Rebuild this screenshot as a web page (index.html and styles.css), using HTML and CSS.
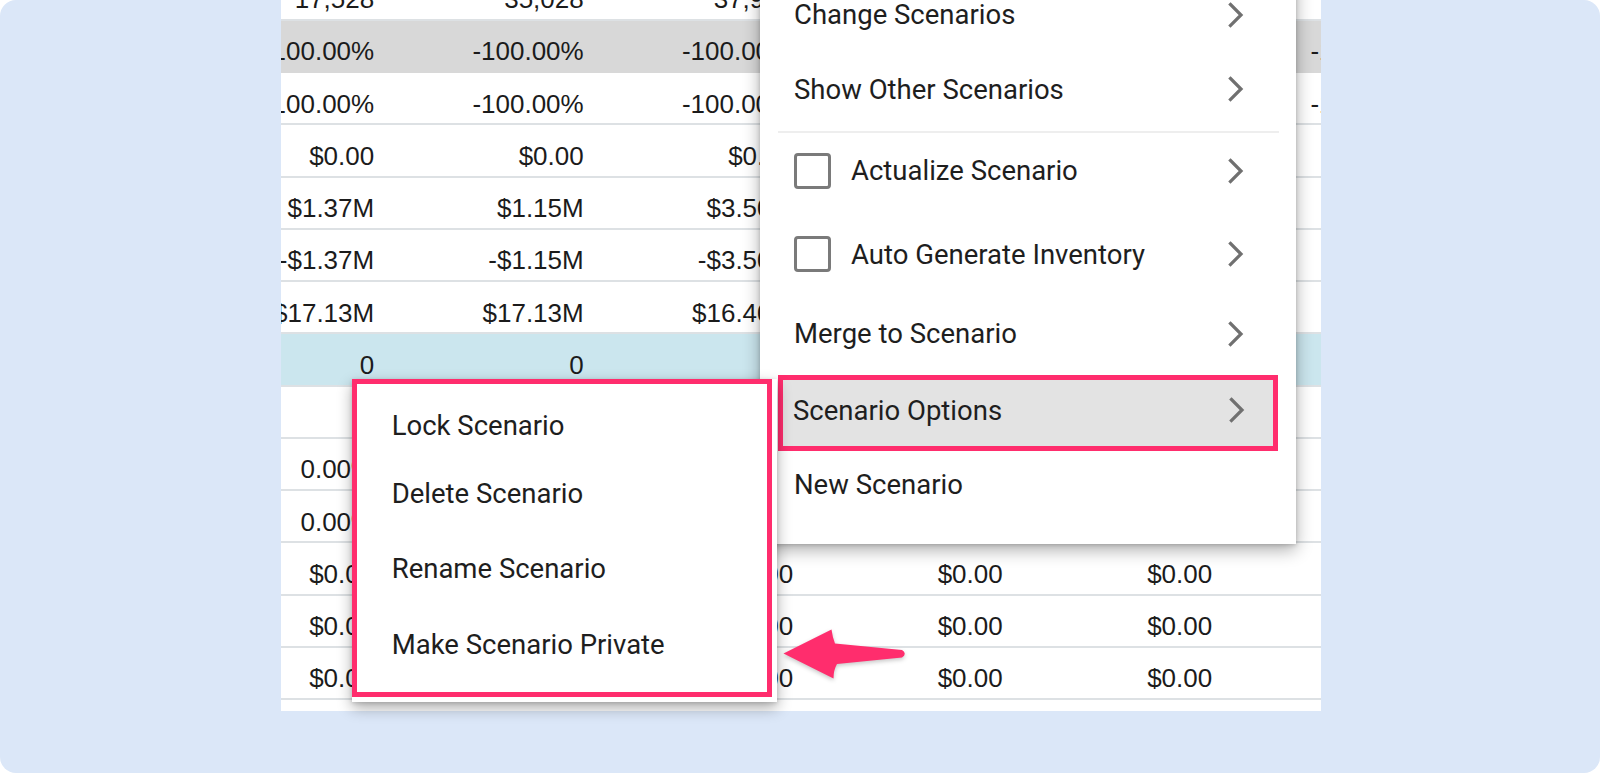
FILE: index.html
```html
<!DOCTYPE html>
<html>
<head>
<meta charset="utf-8">
<link rel="stylesheet" href="styles.css">
</head>
<body>
<div class="card">
  <div class="sheet">
    <div class="rows">
      <div class="row"><div class="cell">17,528</div><div class="cell">35,028</div><div class="cell">37,928</div><div class="cell">41,310</div><div class="cell">44,012</div><div class="cell">46,250</div></div>
      <div class="row row-gray"><div class="cell">-100.00%</div><div class="cell">-100.00%</div><div class="cell">-100.00%</div><div class="cell">-100.00%</div><div class="cell">-100.00%</div><div class="cell">-100.00%</div></div>
      <div class="row"><div class="cell">-100.00%</div><div class="cell">-100.00%</div><div class="cell">-100.00%</div><div class="cell">-100.00%</div><div class="cell">-100.00%</div><div class="cell">-100.00%</div></div>
      <div class="row"><div class="cell">$0.00</div><div class="cell">$0.00</div><div class="cell">$0.00</div><div class="cell">$0.00</div><div class="cell">$0.00</div><div class="cell">$0.00</div></div>
      <div class="row"><div class="cell">$1.37M</div><div class="cell">$1.15M</div><div class="cell">$3.50M</div><div class="cell">$2.10M</div><div class="cell">$1.84M</div><div class="cell">$2.63M</div></div>
      <div class="row"><div class="cell">-$1.37M</div><div class="cell">-$1.15M</div><div class="cell">-$3.50M</div><div class="cell">-$2.10M</div><div class="cell">-$1.84M</div><div class="cell">-$2.63M</div></div>
      <div class="row"><div class="cell">$17.13M</div><div class="cell">$17.13M</div><div class="cell">$16.40M</div><div class="cell">$15.92M</div><div class="cell">$14.08M</div><div class="cell">$3.45M</div></div>
      <div class="row row-blue"><div class="cell">0</div><div class="cell">0</div><div class="cell">0</div><div class="cell">0</div><div class="cell">0</div><div class="cell">0</div></div>
      <div class="row"><div class="cell"></div><div class="cell"></div><div class="cell"></div><div class="cell"></div><div class="cell"></div><div class="cell"></div></div>
      <div class="row"><div class="cell">0.00%</div><div class="cell">0.00%</div><div class="cell">0.00%</div><div class="cell">0.00%</div><div class="cell">0.00%</div><div class="cell">0.00%</div></div>
      <div class="row"><div class="cell">0.00%</div><div class="cell">0.00%</div><div class="cell">0.00%</div><div class="cell">0.00%</div><div class="cell">0.00%</div><div class="cell">0.00%</div></div>
      <div class="row"><div class="cell">$0.00</div><div class="cell">$0.00</div><div class="cell">$0.00</div><div class="cell">$0.00</div><div class="cell">$0.00</div><div class="cell">$0.00</div></div>
      <div class="row"><div class="cell">$0.00</div><div class="cell">$0.00</div><div class="cell">$0.00</div><div class="cell">$0.00</div><div class="cell">$0.00</div><div class="cell">$0.00</div></div>
      <div class="row"><div class="cell">$0.00</div><div class="cell">$0.00</div><div class="cell">$0.00</div><div class="cell">$0.00</div><div class="cell">$0.00</div><div class="cell">$0.00</div></div>
      <div class="row"><div class="cell"></div><div class="cell"></div><div class="cell"></div><div class="cell"></div><div class="cell"></div><div class="cell"></div></div>
    </div>
  </div>

  <div class="menu">
    <div class="mi mi-change"><span class="label">Change Scenarios</span><svg class="chev" viewBox="0 0 16 26"><polyline points="2.5,2.5 13,13 2.5,23.5"/></svg></div>
    <div class="mi mi-show"><span class="label">Show Other Scenarios</span><svg class="chev" viewBox="0 0 16 26"><polyline points="2.5,2.5 13,13 2.5,23.5"/></svg></div>
    <div class="divider"></div>
    <div class="mi mi-actualize"><span class="box"></span><span class="label">Actualize Scenario</span><svg class="chev" viewBox="0 0 16 26"><polyline points="2.5,2.5 13,13 2.5,23.5"/></svg></div>
    <div class="mi mi-auto"><span class="box"></span><span class="label">Auto Generate Inventory</span><svg class="chev" viewBox="0 0 16 26"><polyline points="2.5,2.5 13,13 2.5,23.5"/></svg></div>
    <div class="mi mi-merge"><span class="label">Merge to Scenario</span><svg class="chev" viewBox="0 0 16 26"><polyline points="2.5,2.5 13,13 2.5,23.5"/></svg></div>
    <div class="mi mi-options"><span class="label">Scenario Options</span><svg class="chev" viewBox="0 0 16 26"><polyline points="2.5,2.5 13,13 2.5,23.5"/></svg></div>
    <div class="mi mi-new"><span class="label">New Scenario</span></div>
  </div>

  <div class="submenu">
    <div class="annot">
      <div class="si si-lock">Lock Scenario</div>
      <div class="si si-delete">Delete Scenario</div>
      <div class="si si-rename">Rename Scenario</div>
      <div class="si si-private">Make Scenario Private</div>
    </div>
  </div>

  <svg class="arrow" viewBox="0 0 140 70" width="140" height="70">
    <path d="M8.5,33.5 L56.5,9.5 Q57.5,17 60,23.5 L127,30 Q132.5,33.5 127,37.5 L62,44 Q58.5,50 58.5,58.5 Z"/>
  </svg>
</div>
</body>
</html>
```
FILE: styles.css
```css
html, body {
  margin: 0;
  padding: 0;
  background: #ffffff;
}

.card {
  position: relative;
  width: 1600px;
  height: 773px;
  box-sizing: border-box;
  padding-left: 281px;
  background: #dbe7f8;
  border-radius: 16px;
  overflow: hidden;
}

.sheet {
  width: 1040px;
  height: 711px;
  background: #ffffff;
  overflow: hidden;
}

.rows {
  width: 1257px;
  margin-left: -106.8px;
  margin-top: -31.5px;
  font-family: "Liberation Sans", Arial, sans-serif;
  font-size: 26px;
  color: #1b1b1b;
}

.row {
  display: flex;
  align-items: center;
  height: 52.25px;
  box-sizing: border-box;
  padding-top: 12px;
  border-bottom: 2px solid #dde1e4;
}

.row-gray {
  background: #d8d8d8;
  border-bottom-color: #d8d8d8;
}

.row-blue {
  background: #cbe6ee;
}

.cell {
  flex: none;
  width: 209.5px;
  box-sizing: border-box;
  padding-right: 9.5px;
  text-align: right;
  white-space: nowrap;
}

/* main context menu */
.menu {
  position: absolute;
  left: 760px;
  top: -23px;
  width: 536px;
  padding-bottom: 25.3px;
  background: #ffffff;
  box-shadow: 0 6px 16px rgba(0, 0, 0, 0.32), 0 1px 4px rgba(0, 0, 0, 0.18);
  font-family: Roboto, "Noto Sans", sans-serif;
  font-size: 27.5px;
  color: #1e1e1e;
  z-index: 2;
}

.mi {
  display: flex;
  align-items: center;
  box-sizing: border-box;
  padding-left: 34px;
  padding-right: 52px;
}

.mi .label {
  flex: 1;
  white-space: nowrap;
}

.chev {
  width: 16px;
  height: 26px;
  flex: none;
}

.chev polyline {
  fill: none;
  stroke: #707070;
  stroke-width: 3.2;
  stroke-linecap: square;
}

.box {
  flex: none;
  width: 37px;
  height: 36px;
  box-sizing: border-box;
  border: 3.5px solid #7a7a7a;
  border-radius: 4px;
  margin-right: 20px;
}

.mi-change { height: 75px; }
.mi-show { height: 74px; }
.divider {
  height: 2px;
  margin: 4.5px 17px 4.5px 18px;
  background: #eeeeee;
}
.mi-actualize { height: 72px; padding-bottom: 5px; }
.mi-auto { height: 86px; padding-top: 4px; }
.mi-merge { height: 77px; }
.mi-options {
  height: 75.7px;
  margin: 3px 18px 0 17.5px;
  padding-left: 10.5px;
  padding-right: 28px;
  padding-bottom: 5px;
  background: #e3e3e3;
  border: 5.5px solid #ff2d6d;
}
.mi-new { height: 68px; }

/* submenu */
.submenu {
  position: absolute;
  left: 352px;
  top: 379px;
  width: 425px;
  height: 323px;
  background: #ffffff;
  box-shadow: 0 6px 14px rgba(0, 0, 0, 0.32), 0 1px 4px rgba(0, 0, 0, 0.15);
  z-index: 3;
}

.annot {
  width: 420px;
  height: 318px;
  box-sizing: border-box;
  border: 5px solid #ff2d6d;
  padding-top: 7.5px;
  font-family: Roboto, "Noto Sans", sans-serif;
  font-size: 27.5px;
  color: #1e1e1e;
}

.si {
  display: flex;
  align-items: center;
  box-sizing: border-box;
  padding-left: 34.7px;
  white-space: nowrap;
}

.si-lock { height: 68px; }
.si-delete { height: 68px; }
.si-rename { height: 78.5px; padding-top: 3px; }
.si-private { height: 76px; }

.arrow {
  position: absolute;
  left: 775px;
  top: 620px;
  z-index: 4;
  filter: drop-shadow(0 2px 2px rgba(0, 0, 0, 0.22));
}

.arrow path {
  fill: #ff2d6d;
}
```
